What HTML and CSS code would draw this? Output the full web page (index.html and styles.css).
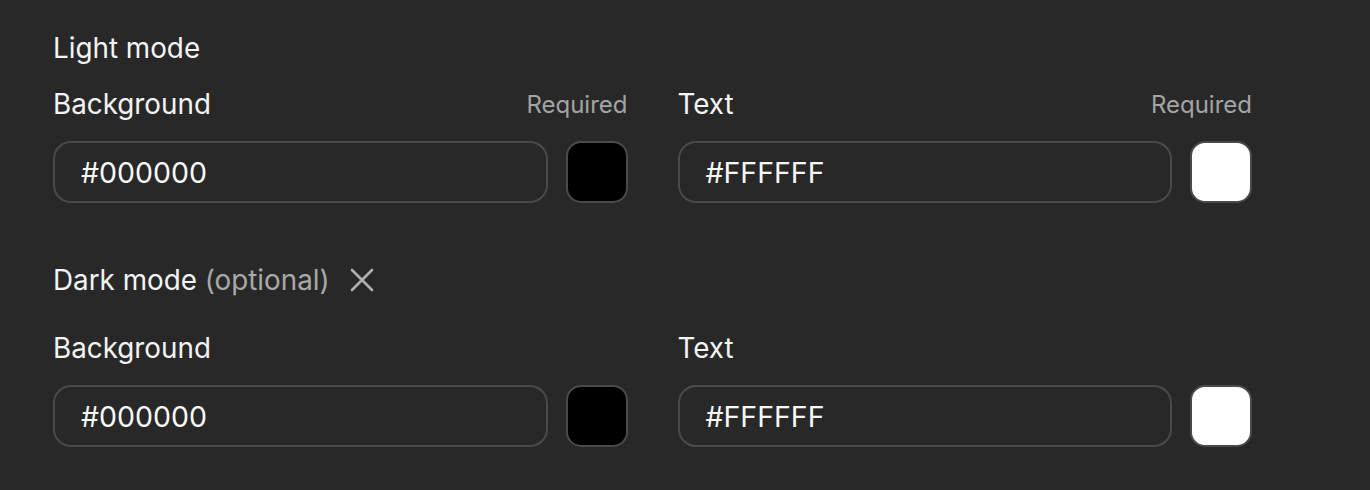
FILE: index.html
```html
<!DOCTYPE html>
<html>
<head>
<meta charset="utf-8">
<link rel="stylesheet" href="styles.css">
</head>
<body>
<div class="page">
  <section class="mode">
    <div class="mode-title">Light mode</div>
    <div class="fields">
      <div class="field">
        <div class="field-head"><span class="label">Background</span><span class="req">Required</span></div>
        <div class="field-row">
          <div class="input">#000000</div>
          <div class="swatch swatch-black"></div>
        </div>
      </div>
      <div class="field">
        <div class="field-head"><span class="label">Text</span><span class="req">Required</span></div>
        <div class="field-row">
          <div class="input">#FFFFFF</div>
          <div class="swatch swatch-white"></div>
        </div>
      </div>
    </div>
  </section>
  <section class="mode mode-dark">
    <div class="mode-title"><span>Dark mode&nbsp;<span class="opt">(optional)</span></span>
      <span class="close"><svg width="24" height="24" viewBox="0 0 24 24"><path d="M2 2 L22 22 M22 2 L2 22" stroke="#b0b0b0" stroke-width="2.6" stroke-linecap="round" fill="none"/></svg></span>
    </div>
    <div class="fields">
      <div class="field">
        <div class="field-head"><span class="label">Background</span></div>
        <div class="field-row">
          <div class="input">#000000</div>
          <div class="swatch swatch-black"></div>
        </div>
      </div>
      <div class="field">
        <div class="field-head"><span class="label">Text</span></div>
        <div class="field-row">
          <div class="input">#FFFFFF</div>
          <div class="swatch swatch-white"></div>
        </div>
      </div>
    </div>
  </section>
</div>
</body>
</html>
```
FILE: styles.css
```css
html, body {
  margin: 0;
  padding: 0;
  background: #282828;
}
body {
  font-family: Inter, "Noto Sans", sans-serif;
  color: #f4f4f4;
}
.page {
  width: 1199px;
  padding: 32px 0 0 53px;
}
.mode-title {
  font-size: 27.8px;
  line-height: 32px;
  height: 32px;
  display: flex;
  align-items: center;
}
.opt {
  color: #a8a8a8;
}
.close {
  display: inline-flex;
  margin-left: 20px;
  width: 24px;
  height: 24px;
}
.fields {
  display: grid;
  grid-template-columns: 1fr 1fr;
  column-gap: 50px;
  margin-top: 24px;
}
.mode-dark {
  margin-top: 61px;
}
.mode-dark .fields {
  margin-top: 36px;
}
.field-head {
  display: flex;
  justify-content: space-between;
  align-items: center;
  height: 32px;
}
.label {
  font-size: 27.8px;
  line-height: 32px;
}
.req {
  font-size: 24px;
  color: #a4a4a4;
}
.field-row {
  display: flex;
  gap: 18px;
  margin-top: 21px;
}
.input {
  flex: 1;
  height: 62px;
  box-sizing: border-box;
  border: 2px solid #4a4a4a;
  border-radius: 18px;
  padding-left: 26px;
  display: flex;
  align-items: center;
  font-size: 28.5px;
  color: #f8f8f8;
}
.swatch {
  width: 62px;
  height: 62px;
  box-sizing: border-box;
  border-radius: 15px;
  border: 2px solid #4a4a4a;
}
.swatch-black { background: #000; }
.swatch-white { background: #fff; }
```
